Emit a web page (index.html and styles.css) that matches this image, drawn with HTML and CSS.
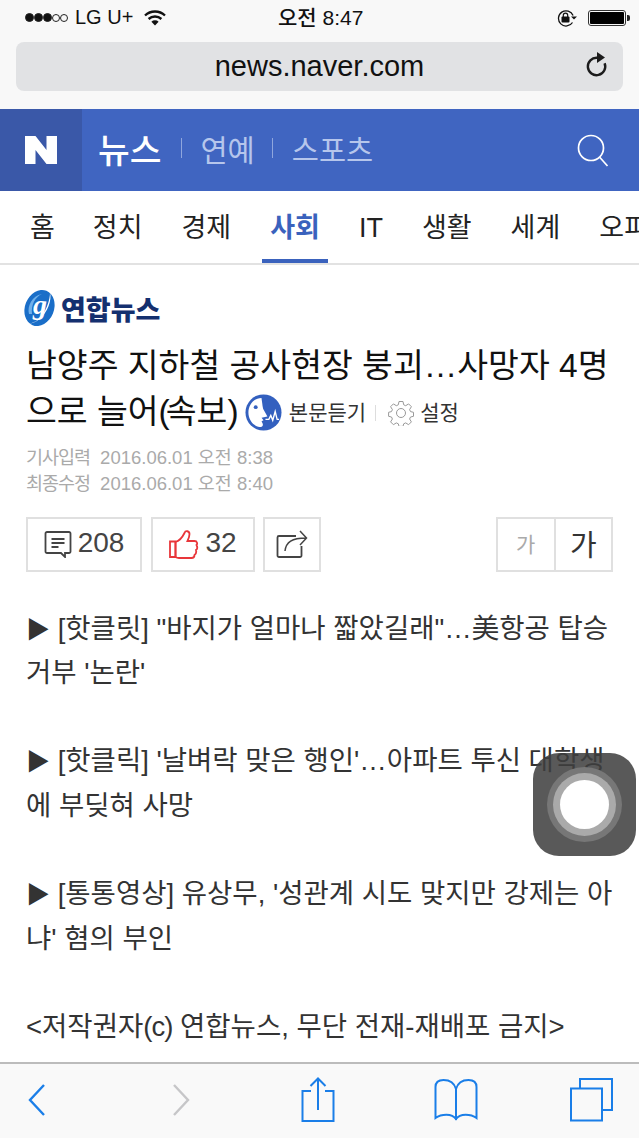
FILE: index.html
```html
<!DOCTYPE html>
<html lang="ko">
<head>
  <meta charset="UTF-8">
  <meta name="viewport" content="width=device-width, initial-scale=1.0">
  <title>연합뉴스 - 네이버 뉴스</title>
  <link rel="stylesheet" href="styles.css">
</head>
<body>
  <div class="phone">
    <div class="browserTop">
      <div class="statusBar">
        <div class="statusLeft">
          <span class="signal"><i class="on"></i><i class="on"></i><i class="on"></i><i></i><i></i></span>
          <span class="carrier">LG U+</span>
          <svg class="wifi" width="22" height="16" viewBox="0 0 22 16">
            <path d="M1 5.500a14.500 14.500 0 0 1 20 0" fill="none" stroke="#111" stroke-width="2.400"/>
            <path d="M4.600 9a9.400 9.400 0 0 1 12.800 0" fill="none" stroke="#111" stroke-width="2.400"/>
            <path d="M11 15.500l-3.600-3.800a5.200 5.200 0 0 1 7.200 0z" fill="#111"/>
          </svg>
        </div>
        <div class="clock">오전 8:47</div>
        <div class="statusRight">
          <svg width="21" height="18" viewBox="0 0 21 18">
            <path d="M15.500 13.500a7.600 7.600 0 1 1 .6-7" fill="none" stroke="#111" stroke-width="1.300"/>
            <path d="M14 7.500h6l-3 3z" fill="#111"/>
            <rect x="4.500" y="7.600" width="8" height="6" rx="1" fill="#111"/>
            <path d="M6.300 8V6.300a2.200 2.200 0 0 1 4.400 0V8" fill="none" stroke="#111" stroke-width="1.200"/>
          </svg>
          <div class="battery"><div class="batteryFill"></div></div>
          <div class="batteryNub"></div>
        </div>
      </div>
      <div class="urlBar">
        <span class="urlText">news.naver.com</span>
        <svg class="reload" width="26" height="28" viewBox="0 0 26 28">
          <path d="M19.600 12.200a8.700 8.700 0 1 1-7.400-5.400" fill="none" stroke="#1c1c1c" stroke-width="2.400"/>
          <path d="M12 1l8 5.600-8 5.400z" fill="#1c1c1c"/>
        </svg>
      </div>
    </div>

    <div class="naverHeader">
      <div class="naverLogo">
        <svg width="34" height="30" viewBox="0 0 34 30"><path d="M1 1h10.500l11 14V1H33v28H22.500l-11-14v14H1z" fill="#fff"/></svg>
      </div>
      <div class="headerNav">
        <a class="headerCurrent">뉴스</a>
        <span class="headerSep"></span>
        <a>연예</a>
        <span class="headerSep headerSepLast"></span>
        <a>스포츠</a>
      </div>
      <svg class="searchIcon" width="34" height="34" viewBox="0 0 34 34">
        <circle cx="15" cy="15" r="12.500" fill="none" stroke="#fff" stroke-width="1.700"/>
        <path d="M23.500 24l8 9" stroke="#fff" stroke-width="1.700"/>
      </svg>
    </div>

    <div class="tabs">
      <a class="tab tabHome">홈</a>
      <a class="tab">정치</a>
      <a class="tab">경제</a>
      <a class="tab tabActive">사회</a>
      <a class="tab">IT</a>
      <a class="tab">생활</a>
      <a class="tab">세계</a>
      <a class="tab">오피니언</a>
    </div>

    <div class="article">
      <div class="pressLogo">
        <svg width="33" height="38" viewBox="0 0 33 38">
          <ellipse cx="16.500" cy="19" rx="14.500" ry="18.500" fill="#1a6ec8" transform="rotate(22 16.500 19)"/>
          <path d="M27 3.500c2 7-2 20-11 27-4 3-8 4.500-11 4 5 0 10-3 14-8 5-7 8-16 8-23z" fill="#fff"/>
          <path d="M6 25C4 17 9 7 19 5c-7 3-11 11-10 20z" fill="#6fb0ea"/>
          <text x="17" y="25" class="logoG">g</text>
        </svg>
        <span class="pressName">연합뉴스</span>
      </div>

      <h1 class="title">남양주 지하철 공사현장 붕괴…사망자 4명<br>으로 늘어<span class="parenOpen">(</span>속보<span class="parenClose">)</span>
        <span class="titleTools">
          <svg class="listenIcon" width="37" height="37" viewBox="0 0 38 38">
            <circle cx="19" cy="19" r="18.500" fill="#3360bf"/>
            <path d="M17 4C9 4 3.500 11 3.500 19S9 33 15 34c3 0 4-2 3-4l-1-2 2-1-2-2.500 6-1.500-4-7c-1-3-1-5-2-11.500z" fill="#fff"/>
            <circle cx="11" cy="13.500" r="2" fill="#3360bf"/>
            <path d="M21 26h3.500l2-4 2 5 2.500-9 2 8h2" fill="none" stroke="#fff" stroke-width="1.400"/>
          </svg>
          <span class="listenText">본문듣기</span>
          <span class="toolSep"></span>
          <svg class="gearIcon" width="26" height="26" viewBox="0 0 26 26">
            <path d="M11 1.500h4l.7 3.300 2 .9 2.900-1.800 2.800 2.800-1.800 2.900.9 2 3 .7v4l-3 .7-.9 2 1.800 2.900-2.800 2.800-2.900-1.800-2 .9-.7 2.600h-4l-.7-2.600-2-.9-2.900 1.800-2.800-2.800 1.800-2.900-.9-2-2.900-.7v-4l2.900-.7.9-2-1.800-2.900 2.800-2.800 2.900 1.800 2-.9z" fill="none" stroke="#999" stroke-width="1"/>
            <circle cx="13" cy="13" r="4.500" fill="none" stroke="#999" stroke-width="1"/>
          </svg>
          <span class="listenText">설정</span>
        </span>
      </h1>

      <div class="meta">
        <div class="metaRow"><span class="metaLabel">기사입력</span>2016.06.01 오전 8:38</div>
        <div class="metaRow"><span class="metaLabel">최종수정</span>2016.06.01 오전 8:40</div>
      </div>

      <div class="actions">
        <a class="actionBtn btnComment">
          <svg width="28" height="28" viewBox="0 0 28 28">
            <path d="M3 2h22a1.500 1.500 0 0 1 1.500 1.500v18a1.500 1.500 0 0 1-1.500 1.500h-4v4l-4-4H3a1.500 1.500 0 0 1-1.500-1.500v-18A1.500 1.500 0 0 1 3 2z" fill="none" stroke="#444" stroke-width="1.800"/>
            <path d="M7.500 9h13M7.500 13h13M7.500 17h7" stroke="#444" stroke-width="1.800"/>
          </svg>
          <span class="actionCount">208</span>
        </a>
        <a class="actionBtn btnLike">
          <svg width="30" height="30" viewBox="0 0 30 30">
            <path d="M1 12.500h5.500v15.500H1z" fill="none" stroke="#e8363a" stroke-width="1.800"/>
            <path d="M6.500 13c4-1 7-5 9-9 1-3 5-2 5 1 0 3-1 5-2 7h7c3 0 3 3 2 4 1 2 1 4-.5 5 .5 2 0 4-1.500 5 0 2-1 3-3 3H10c-2 0-3.500-1-3.500-1z" fill="none" stroke="#e8363a" stroke-width="1.800"/>
          </svg>
          <span class="actionCount">32</span>
        </a>
        <a class="actionBtn btnShare">
          <svg width="32" height="30" viewBox="0 0 32 30">
            <path d="M20 7H3a1.500 1.500 0 0 0-1.500 1.500v18A1.500 1.500 0 0 0 3 28h21a1.500 1.500 0 0 0 1.500-1.500V17" fill="none" stroke="#444" stroke-width="1.800"/>
            <path d="M9 22c1-9 7-13 21-13M24 2l6.500 7-6.500 7" fill="none" stroke="#444" stroke-width="1.500"/>
          </svg>
        </a>
        <div class="fontBtns">
          <a class="fontBtn fontSmall">가</a>
          <a class="fontBtn fontLarge">가</a>
        </div>
      </div>

      <div class="body">
        <p><span class="arrow">▶</span> [핫클릿] "바지가 얼마나 짧았길래"…美항공 탑승 거부 '논란'</p>
        <p><span class="arrow">▶</span> [핫클릭] '날벼락 맞은 행인'…아파트 투신 대학생에 부딪혀 사망</p>
        <p><span class="arrow">▶</span> [통통영상] 유상무, '성관계 시도 맞지만 강제는 아냐' 혐의 부인</p>
        <p>&lt;저작권자<span class="tight">(c)</span> 연합뉴스, 무단 전재-재배포 금지&gt;</p>
      </div>
    </div>

    <div class="assistive">
      <div class="assistiveRing"><div class="assistiveInner"><div class="assistiveDot"></div></div></div>
    </div>

    <div class="toolbar">
      <svg class="toolBack" width="20" height="34" viewBox="0 0 20 34"><path d="M17 2L3 17l14 15" fill="none" stroke="#1a7ee8" stroke-width="2.400"/></svg>
      <svg class="toolForward" width="20" height="34" viewBox="0 0 20 34"><path d="M3 2l14 15L3 32" fill="none" stroke="#c6c6c8" stroke-width="2.400"/></svg>
      <svg class="toolShare" width="34" height="46" viewBox="0 0 34 46"><path d="M10 14H1.500v30h31V14H24M17 33V2M9.500 9L17 1.500 24.500 9" fill="none" stroke="#1a7ee8" stroke-width="2"/></svg>
      <svg class="toolBook" width="44" height="42" viewBox="0 0 44 42"><path d="M22 10C20 3 15 1 9.500 1 4 1 1.500 4 1.500 8v31C7 35 18 34 22 40c4-6 15-5 20.500-1V8c0-4-2.500-7-8-7C29 1 24 3 22 10zM22 10v31" fill="none" stroke="#1a7ee8" stroke-width="2"/></svg>
      <svg class="toolTabs" width="44" height="44" viewBox="0 0 44 44"><path d="M2 10.500h31v32H2zM11 10V1h32v31h-9" fill="none" stroke="#1a7ee8" stroke-width="2"/></svg>
    </div>
  </div>
</body>
</html>
```

FILE: styles.css
```css
* {
  box-sizing: border-box;
}

html,
body {
  margin: 0;
  padding: 0;
}

body {
  font-family: "Liberation Sans", "Noto Sans CJK KR", sans-serif;
  background-color: #fff;
  color: #222;
}

.phone {
  position: relative;
  width: 639px;
  height: 1138px;
  overflow: hidden;
  display: flex;
  flex-direction: column;
}

/* Safari top */
.browserTop {
  height: 109px;
  flex: none;
  background-color: #f8f8f8;
  padding: 0 16px;
}

.statusBar {
  height: 42px;
  display: flex;
  align-items: center;
  justify-content: space-between;
  padding: 0 0 7px;
  position: relative;
}

.statusLeft {
  display: flex;
  align-items: center;
  margin-left: 9px;
}

.signal {
  display: flex;
  align-items: center;
  margin-right: 7px;
}

.signal i {
  width: 8px;
  height: 8px;
  border-radius: 50%;
  border: 1px solid #222;
}

.signal i.on {
  width: 9px;
  height: 9px;
  background-color: #111;
}

.carrier {
  font-size: 20px;
  color: #111;
  margin-right: 11px;
}

.clock {
  font-size: 21px;
  font-weight: 500;
  color: #111;
  position: absolute;
  left: 262px;
  top: 1px;
}

.statusRight {
  display: flex;
  align-items: center;
  margin-right: -7px;
}

.battery {
  width: 38px;
  height: 16px;
  margin-left: 10px;
  border: 1px solid #333;
  border-radius: 3px;
  padding: 1px;
}

.batteryFill {
  height: 100%;
  background-color: #000;
  border-radius: 1px;
}

.batteryNub {
  width: 3px;
  height: 6px;
  margin-left: 1px;
  background-color: #222;
  border-radius: 0 2px 2px 0;
}

.urlBar {
  height: 49px;
  background-color: #e1e2e4;
  border-radius: 8px;
  display: flex;
  align-items: center;
  justify-content: center;
  position: relative;
}

.urlText {
  font-size: 29px;
  color: #111;
}

.reload {
  position: absolute;
  right: 12px;
  top: 9px;
}

/* Naver header */
.naverHeader {
  height: 82px;
  flex: none;
  background-color: #4065c1;
  display: flex;
  align-items: center;
}

.naverLogo {
  width: 82px;
  height: 100%;
  background-color: #3a58a8;
  display: flex;
  align-items: center;
  justify-content: center;
}

.headerNav {
  display: flex;
  align-items: center;
  margin-left: 16px;
  padding-bottom: 4px;
  font-size: 29.500px;
  color: #b6c6ec;
  flex: 1;
}

.headerCurrent {
  color: #fff;
  font-weight: 500;
  font-size: 34.500px;
}

.headerSep {
  width: 1px;
  height: 20px;
  background-color: #8fa6dd;
  margin: 0 18px 0 20px;
}

.headerSepLast {
  margin: 0 19px 0 17px;
}

.searchIcon {
  margin-right: 29px;
}

/* Section tabs */
.tabs {
  height: 74px;
  flex: none;
  display: flex;
  border-bottom: 2px solid #e2e2e2;
  white-space: nowrap;
  overflow: hidden;
  padding-left: 30px;
  gap: 39px;
}

.tab {
  position: relative;
  font-size: 27px;
  line-height: 74px;
  color: #222;
}

.tabHome {
  margin-right: -1px;
}

.tabActive {
  color: #3a62bd;
  font-weight: bold;
}

.tabActive::after {
  content: "";
  position: absolute;
  left: -8px;
  right: -8px;
  top: 68px;
  height: 4px;
  background-color: #3a62bd;
}

/* Article */
.article {
  padding: 23px 26px 0;
  flex: 1;
}

.pressLogo {
  display: flex;
  align-items: center;
  height: 40px;
  margin-left: -3px;
}

.logoG {
  font-family: "Liberation Serif", serif;
  font-size: 28px;
  font-style: italic;
  font-weight: bold;
  fill: #fff;
  text-anchor: middle;
}

.pressName {
  font-size: 27px;
  font-weight: 900;
  color: #14306f;
  margin-left: 5px;
}

.title {
  margin: 15px 0 0;
  font-size: 33.500px;
  font-weight: 400;
  line-height: 46px;
  color: #111;
  white-space: nowrap;
}

.parenOpen {
  letter-spacing: -4px;
}

.parenClose {
  letter-spacing: -8px;
}

.titleTools {
  display: inline-flex;
  align-items: center;
  vertical-align: -8px;
  margin-left: 5px;
  letter-spacing: 0;
}

.listenText {
  font-size: 21px;
  color: #333;
  margin-left: 7px;
}

.toolSep {
  width: 1px;
  height: 16px;
  background-color: #ddd;
  margin: 0 12px 0 9px;
}

.gearIcon {
  margin-right: -1px;
}

.meta {
  margin-top: 9px;
  font-size: 18.500px;
  line-height: 26px;
  color: #aaa;
}

.metaLabel {
  margin-right: 10px;
  letter-spacing: -1px;
}

.actions {
  display: flex;
  margin-top: 20px;
  height: 55px;
}

.actionBtn {
  height: 100%;
  border: 2px solid #e0e0e0;
  display: flex;
  align-items: center;
  justify-content: center;
  gap: 6px;
  font-size: 28px;
  color: #444;
}

.actionCount {
  margin-top: -2px;
}

.btnComment {
  width: 116px;
}

.btnLike {
  width: 104px;
  margin-left: 9px;
}

.btnShare {
  width: 58px;
  margin-left: 8px;
}

.fontBtns {
  margin-left: auto;
  display: flex;
  height: 100%;
  width: 117px;
  border: 2px solid #e0e0e0;
}

.fontBtn {
  flex: 1;
  display: flex;
  align-items: center;
  justify-content: center;
  padding-bottom: 3px;
}

.fontSmall {
  font-size: 21px;
  color: #aaa;
  border-right: 2px solid #e0e0e0;
}

.fontLarge {
  font-size: 29px;
  color: #333;
}

.body {
  margin-top: 35px;
  font-size: 27.500px;
  line-height: 44.300px;
  color: #333;
  width: 590px;
}

.body p {
  margin: 0 0 44.300px;
}

.arrow {
  font-size: 24px;
  line-height: 0;
}

.tight {
  letter-spacing: -1px;
}

/* AssistiveTouch button, sits over the text */
.assistive {
  position: absolute;
  left: 533px;
  top: 753px;
  width: 103px;
  height: 103px;
  border-radius: 26px;
  background-color: rgba(62, 62, 62, 0.86);
  display: flex;
  align-items: center;
  justify-content: center;
}

.assistiveRing {
  width: 75px;
  height: 75px;
  border-radius: 50%;
  background-color: #777;
  display: flex;
  align-items: center;
  justify-content: center;
}

.assistiveInner {
  width: 63px;
  height: 63px;
  border-radius: 50%;
  background-color: #aaa;
  display: flex;
  align-items: center;
  justify-content: center;
}

.assistiveDot {
  width: 49px;
  height: 49px;
  border-radius: 50%;
  background-color: #fff;
}

/* Safari bottom */
.toolbar {
  position: absolute;
  left: 0;
  right: 0;
  bottom: 0;
  height: 76px;
  background-color: #f9f9f9;
  border-top: 2px solid #bcbcbc;
  display: flex;
  align-items: center;
  padding: 0 0 2px 27px;
}

.toolForward {
  margin-left: 124px;
}

.toolShare {
  margin-left: 110px;
}

.toolBook {
  margin-left: 99px;
}

.toolTabs {
  margin-left: 91px;
}
```
